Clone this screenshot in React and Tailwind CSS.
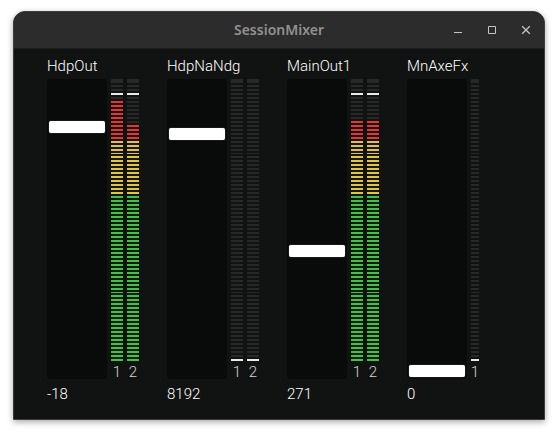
import React, { useState } from "react";

const FADER_MAX = 284;
const SEGMENTS = 71;
const IDLE = SEGMENTS - 1;

const channels = [
  {
    name: "HdpOut",
    value: "-18",
    position: 244,
    meters: [
      { level: 5, peak: 3 },
      { level: 11, peak: 3 },
    ],
  },
  {
    name: "HdpNaNdg",
    value: "8192",
    position: 237,
    meters: [
      { level: SEGMENTS, peak: IDLE },
      { level: SEGMENTS, peak: IDLE },
    ],
  },
  {
    name: "MainOut1",
    value: "271",
    position: 120,
    meters: [
      { level: 10, peak: 3 },
      { level: 10, peak: 3 },
    ],
  },
  {
    name: "MnAxeFx",
    value: "0",
    position: 0,
    meters: [{ level: SEGMENTS, peak: IDLE }],
  },
];

// segments are counted from the top of the meter
function segmentColor(i, level, peak) {
  if (i === peak) return "bg-[#e9ecea]";
  if (i < level) return "bg-[#272828]";
  if (i < 15) return "bg-[#e8352f]";
  if (i < 29) return "bg-[#e6c81e]";
  return "bg-[#37cb37]";
}

function segmentHeight(i) {
  if (i === 0) return "h-1";
  if (i === 18 || i === 53) return "h-px";
  return "h-0.5";
}

function Meter({ label, level, peak, narrow }) {
  return (
    <div className={`flex flex-col items-center ${narrow ? "w-2" : "w-3"}`}>
      <div className="flex w-full flex-col gap-0.5">
        {Array.from({ length: SEGMENTS }, (_, i) => (
          <div
            key={i}
            className={`${segmentHeight(i)} ${segmentColor(i, level, peak)}`}
          />
        ))}
      </div>
      <span className="pt-0.5 text-[15px] leading-[18px] font-light text-[#d4d4d4]">
        {label}
      </span>
    </div>
  );
}

function Fader({ name, value, onChange }) {
  return (
    <div className="h-[300px] w-[60px] rounded bg-[#090a0a] p-0.5">
      <input
        type="range"
        aria-label={name}
        min="0"
        max={FADER_MAX}
        value={value}
        onChange={(e) => onChange(Number(e.target.value))}
        className="m-0 block h-full w-full appearance-none bg-transparent outline-none [direction:rtl] [writing-mode:vertical-lr] [&::-webkit-slider-thumb]:h-3 [&::-webkit-slider-thumb]:w-14 [&::-webkit-slider-thumb]:appearance-none [&::-webkit-slider-thumb]:rounded-[2px] [&::-webkit-slider-thumb]:bg-white [&::-webkit-slider-thumb]:shadow-[0_0_1px_#999999]"
      />
    </div>
  );
}

function Channel({ channel }) {
  const [position, setPosition] = useState(channel.position);

  return (
    <div className="w-[120px]">
      <h2 className="mb-[3px] text-[15px] leading-5 font-light whitespace-nowrap">
        {channel.name}
      </h2>
      <div className="flex h-[300px] gap-1">
        <Fader name={channel.name} value={position} onChange={setPosition} />
        {channel.meters.map((m, i) => (
          <Meter
            key={i}
            label={i + 1}
            level={m.level}
            peak={m.peak}
            narrow={channel.meters.length === 1}
          />
        ))}
      </div>
      <p className="mt-[5px] text-[15px] leading-5 font-light">
        {channel.value}
      </p>
    </div>
  );
}

export default function App() {
  const buttonStyle = "flex h-6 w-6 items-center justify-center";

  return (
    <div className="min-h-screen bg-white px-[13px] pt-[11px] pb-4">
      <div className="overflow-hidden rounded-t-xl border border-[#3a3c3c] bg-[#111312] font-[Roboto,sans-serif] text-white shadow-[0_2px_6px_rgba(0,0,0,0.35)]">
        {/* Title bar */}
        <header className="grid h-9 grid-cols-[1fr_auto_1fr] items-center bg-[#2c2c2c]">
          <h1 className="col-start-2 font-['Noto_Sans',sans-serif] text-sm font-semibold text-[#919191]">
            SessionMixer
          </h1>
          <div className="flex justify-end gap-2.5 pr-1.5 text-[#c4c4c4]">
            <button className={buttonStyle} aria-label="Minimize">
              <svg width="10" height="10" viewBox="0 0 10 10">
                <path d="M1 7.5h8" stroke="currentColor" />
              </svg>
            </button>
            <button className={buttonStyle} aria-label="Maximize">
              <svg width="10" height="10" viewBox="0 0 10 10">
                <path d="M1.5 1.5h7v7h-7z" fill="none" stroke="currentColor" />
              </svg>
            </button>
            <button className={buttonStyle} aria-label="Close">
              <svg width="10" height="10" viewBox="0 0 10 10">
                <path
                  d="M1.2 1.2l7.6 7.6M8.8 1.2l-7.6 7.6"
                  stroke="currentColor"
                  strokeWidth="1.3"
                />
              </svg>
            </button>
          </div>
        </header>

        {/* Channel strips */}
        <main className="flex border-t border-[#1c1e1d] pt-[7px] pb-[15px] pl-[33px]">
          {channels.map((c) => (
            <Channel key={c.name} channel={c} />
          ))}
        </main>
      </div>
    </div>
  );
}
